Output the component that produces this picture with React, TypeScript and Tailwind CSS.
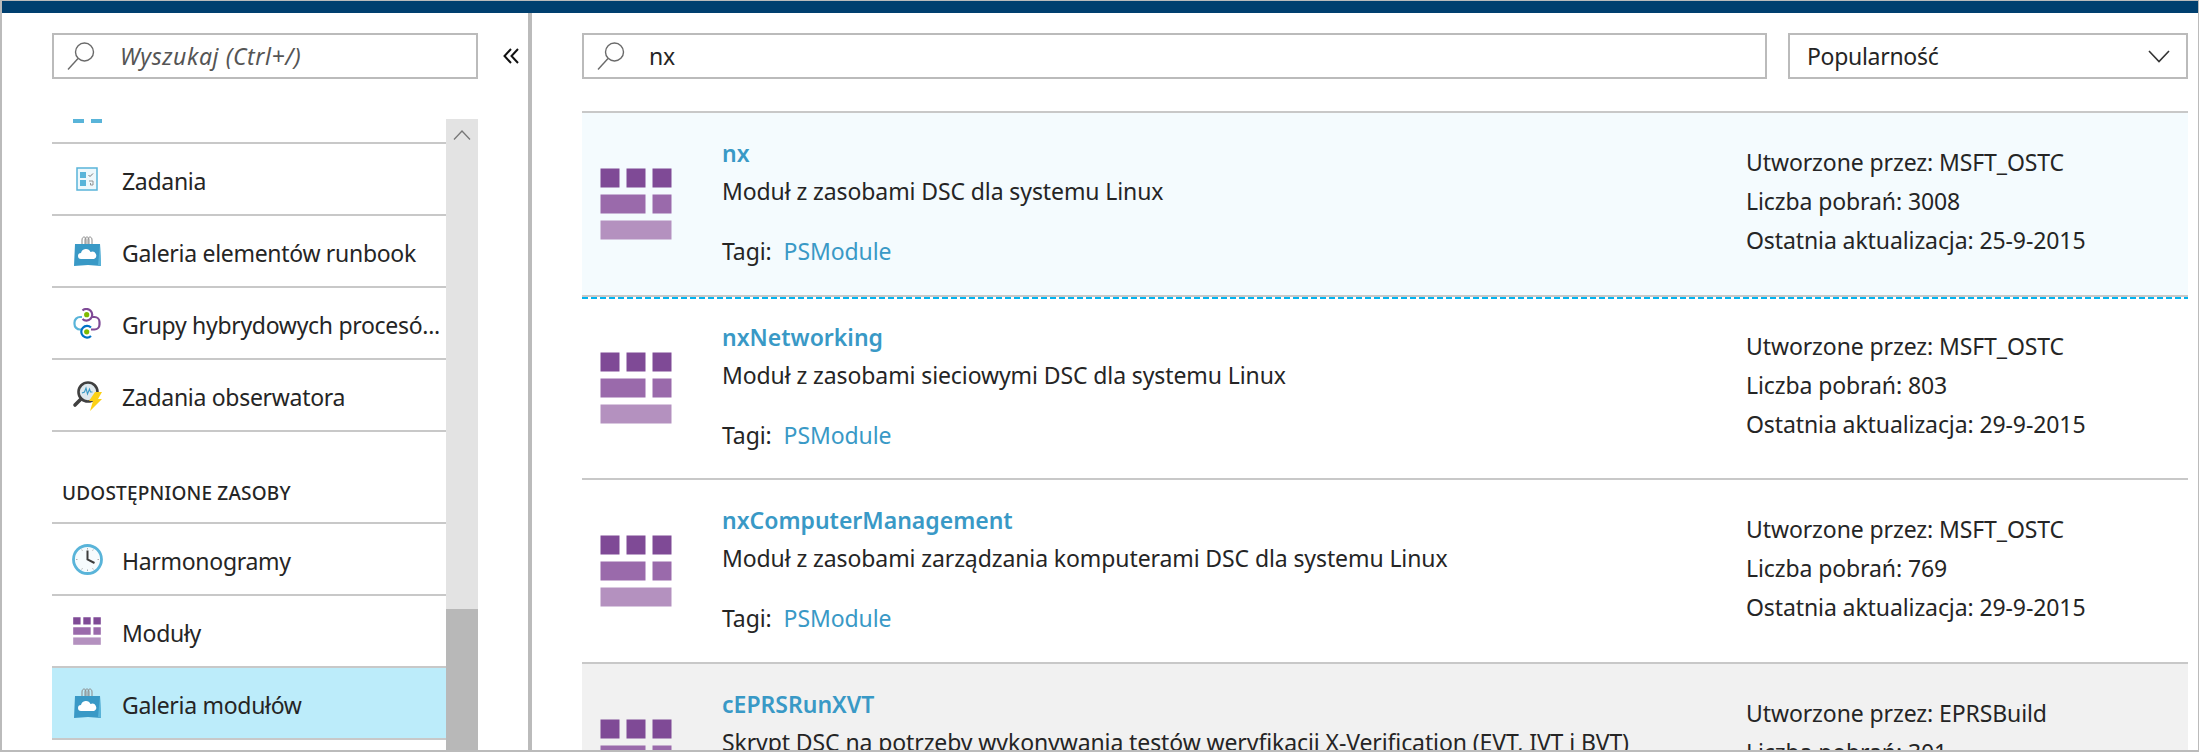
const font = "font-['Noto_Sans',sans-serif]"

const SearchIcon = () => (
  <svg width="30" height="30" viewBox="0 0 30 30" fill="none" stroke="#6a6a6a" strokeWidth="1.4">
    <circle cx="18.5" cy="11" r="9" />
    <path d="M12 17.5 2 28.5" />
  </svg>
)

const ModuleIcon = ({ big }: { big?: boolean }) => (
  <svg width={big ? 72 : 28} height={big ? 72 : 28} viewBox="0 0 72 72">
    <path d="M0.5 0.5h19v19h-19zM26.5 0.5h19v19h-19zM52.5 0.5h19v19h-19z" fill="#7f4a96" />
    <path d="M0.5 26.5h45v19h-45zM52.5 26.5h19v19h-19z" fill="#9a6aab" />
    <path d="M0.5 52.5h71v19h-71z" fill="#b491bf" />
  </svg>
)

const TasksIcon = () => (
  <svg width="22" height="24" viewBox="0 0 22 24">
    <rect x="1" y="1" width="20" height="22" fill="#eef8fc" stroke="#59b4d9" strokeWidth="1.5" />
    <rect x="4" y="5" width="6" height="6" fill="#59b4d9" />
    <rect x="4" y="13" width="6" height="6" fill="#59b4d9" />
    <path d="M12.5 8l1.5 1.5 3-3" fill="none" stroke="#666" strokeWidth="0.9" />
    <path d="M13 14h4v4h-2.500v-2" fill="none" stroke="#888" strokeWidth="0.9" />
  </svg>
)

const BagIcon = () => (
  <svg width="27" height="31" viewBox="0 0 27 31">
    <path d="M8 9V4c0-4 4-4 4 0v5M11 9V4c0-4 4-4 4 0v5M14 9V4c0-4 4-4 4 0v5" fill="none" stroke="#8a8a8a" strokeWidth="1" />
    <path d="M1 8h25l1 22-13-1-14 1z" fill="#3999c6" />
    <path d="M26 8l1 22-3-1z" fill="#59b4d9" />
    <path d="M7 23a3 3 0 0 1 0-6 5 5 0 0 1 9.500-1 3.500 3.500 0 0 1 3.500 7z" fill="#fff" />
  </svg>
)

const HybridIcon = () => (
  <svg width="28" height="31" viewBox="0 0 28 31" fill="none" strokeWidth="2.200">
    <path d="M9 9H7a5.500 5.500 0 0 0-5.500 5.500v1.500A5.500 5.500 0 0 0 7 21.500h2" stroke="#59b4d9" />
    <path d="M19 9h2.500a5 5 0 0 1 5 5v2.500a5 5 0 0 1-5 5H18" stroke="#7f4a96" />
    <path d="M9.500 2.500a5.800 5.800 0 1 1 0 8.500" stroke="#7f4a96" />
    <path d="M18 19.500a5.800 5.800 0 1 0 0 8.500" stroke="#0072c6" />
    <circle cx="13.700" cy="6.700" r="2.600" fill="#7fba00" stroke="none" />
    <circle cx="13.700" cy="23.800" r="2.600" fill="#7fba00" stroke="none" />
  </svg>
)

const WatcherIcon = () => (
  <svg width="30" height="32" viewBox="0 0 30 32">
    <circle cx="16" cy="13" r="9.500" fill="#dfe9ee" stroke="#404040" strokeWidth="2.600" />
    <path d="M9 20 3 26" stroke="#404040" strokeWidth="3.600" strokeLinecap="round" />
    <path d="M10 14l2.500-1 1.500-4 1.500 6 2-5 1 3h2" fill="none" stroke="#3999c6" strokeWidth="1.100" />
    <path d="M23 13h7l-4 7h4L18 32l3-10h-4z" fill="#fcd116" />
  </svg>
)

const ClockIcon = () => (
  <svg width="31" height="31" viewBox="0 0 31 31">
    <circle cx="15.500" cy="15.500" r="14" fill="#f6fbfd" stroke="#59b4d9" strokeWidth="2.800" />
    <path d="M15.500 6.500v9l7 3.500" fill="none" stroke="#3c3c3c" strokeWidth="2" />
    <path d="M15.500 4v1.500M15.500 25.500v1.500M4 15.500h1.500M25.500 15.500h1.500M9.700 5.500l.7 1.200M21.300 5.500l-.7 1.200M9.700 25.500l.7-1.200M21.300 25.500l-.7-1.200" stroke="#999" strokeWidth="0.800" />
  </svg>
)

const navItems = [
  { label: "Zadania", icon: <TasksIcon /> },
  { label: "Galeria elementów runbook", icon: <BagIcon /> },
  { label: "Grupy hybrydowych procesó...", icon: <HybridIcon /> },
  { label: "Zadania obserwatora", icon: <WatcherIcon /> },
  { section: "UDOSTĘPNIONE ZASOBY" },
  { label: "Harmonogramy", icon: <ClockIcon /> },
  { label: "Moduły", icon: <ModuleIcon /> },
  { label: "Galeria modułów", icon: <BagIcon />, active: true },
]

const modules = [
  { name: "nx", desc: "Moduł z zasobami DSC dla systemu Linux", author: "MSFT_OSTC", downloads: "3008", updated: "25-9-2015", selected: true },
  { name: "nxNetworking", desc: "Moduł z zasobami sieciowymi DSC dla systemu Linux", author: "MSFT_OSTC", downloads: "803", updated: "29-9-2015" },
  { name: "nxComputerManagement", desc: "Moduł z zasobami zarządzania komputerami DSC dla systemu Linux", author: "MSFT_OSTC", downloads: "769", updated: "29-9-2015" },
  { name: "cEPRSRunXVT", desc: "Skrypt DSC na potrzeby wykonywania testów weryfikacji X-Verification (EVT, IVT i BVT)", author: "EPRSBuild", downloads: "301", updated: "", gray: true },
]

export default function App() {
  return (
    <div className={`${font} flex h-[752px] w-[2199px] flex-col overflow-hidden border-t border-r border-b-2 border-l-2 border-[#bbbbbb] bg-white text-[23px] tracking-[-0.1px] text-[#252525]`}>
      <div className="h-[12px] shrink-0 bg-[#003f6f]" />
      <div className="flex min-h-0 flex-1">
        <aside className="flex w-[530px] shrink-0 flex-col border-r-4 border-[#bbbbbb] pt-[20px] pl-[50px]">
          <div className="flex items-center">
            <div className="flex h-[46px] w-[426px] items-center border-2 border-[#bbbbbb] pl-[12px]">
              <SearchIcon />
              <span className="ml-[24px] tracking-[0.6px] text-[#555555] italic">Wyszukaj (Ctrl+/)</span>
            </div>
            <svg className="ml-[25px]" width="16" height="16" viewBox="0 0 16 16" fill="none" stroke="#111" strokeWidth="2">
              <path d="M8 1 1.500 8 8 15M15 1 8.500 8 15 15" />
            </svg>
          </div>
          <div className="mt-[40px] flex min-h-0 w-[426px] flex-1">
            <div className="w-[394px]">
              <div className="flex h-[25px] gap-[7px] border-b-2 border-[#c8c8c8] pl-[21px]">
                <div className="h-[4px] w-[11px] bg-[#59b4d9]" />
                <div className="h-[4px] w-[11px] bg-[#59b4d9]" />
              </div>
              {navItems.map((item) =>
                item.section ? (
                  <div key={item.section} className="flex h-[92px] items-end border-b-2 border-[#c8c8c8] pb-[15px] pl-[10px] text-[19px] font-medium tracking-[0.2px]">
                    {item.section}
                  </div>
                ) : (
                  <div key={item.label} className={`flex h-[72px] items-center border-b-2 border-[#c8c8c8] ${item.active ? "bg-[#bcecfa]" : ""}`}>
                    <div className="flex w-[70px] shrink-0 justify-center">{item.icon}</div>
                    <span className="pt-[4px] tracking-[-0.3px] whitespace-nowrap">{item.label}</span>
                  </div>
                ),
              )}
            </div>
            <div className="flex w-[32px] flex-col bg-[#e3e3e3]">
              <svg className="mx-auto mt-[11px]" width="18" height="10" viewBox="0 0 18 10" fill="none" stroke="#777" strokeWidth="1.300">
                <path d="M1 9.500 9 1l8 8.500" />
              </svg>
              <div className="mt-auto h-[141px] bg-[#b8b8b8]" />
            </div>
          </div>
        </aside>
        <main className="min-w-0 flex-1 pt-[20px] pr-[10px] pl-[50px]">
          <div className="flex gap-[21px]">
            <div className="flex h-[46px] w-[1185px] items-center border-2 border-[#bbbbbb] pl-[12px]">
              <SearchIcon />
              <span className="ml-[23px]">nx</span>
            </div>
            <div className="flex h-[46px] w-[400px] items-center justify-between border-2 border-[#bbbbbb] pr-[16px] pl-[17px]">
              <span className="tracking-[-0.3px]">Popularność</span>
              <svg width="22" height="13" viewBox="0 0 22 13" fill="none" stroke="#333" strokeWidth="1.600">
                <path d="m1 1 10 10.500L21 1" />
              </svg>
            </div>
          </div>
          <div className="mt-[32px] border-t-2 border-[#c8c8c8]">
            {modules.map((m) => (
              <div
                key={m.name}
                className={`relative grid h-[183.5px] grid-cols-[140px_1fr_442px] border-b-2 border-[#c8c8c8] ${m.selected ? "bg-[#f4fbfe]" : m.gray ? "bg-[#f1f1f1]" : ""}`}
              >
                <div className="pt-[55px] pl-[18px]">
                  <ModuleIcon big />
                </div>
                <div className="pt-[26px]">
                  <div className="h-[28px] leading-[28px] font-semibold tracking-normal text-[#3999c6]">{m.name}</div>
                  <div className="mt-[10px] h-[28px] leading-[28px] whitespace-nowrap">{m.desc}</div>
                  <div className="mt-[32px] flex h-[28px] gap-[12px] leading-[28px]">
                    Tagi: <span className="text-[#3999c6]">PSModule</span>
                  </div>
                </div>
                <div className="pt-[30px] leading-[39px]">
                  <div>Utworzone przez: {m.author}</div>
                  <div>Liczba pobrań: {m.downloads}</div>
                  {m.updated && <div>Ostatnia aktualizacja: {m.updated}</div>}
                </div>
                {m.selected && (
                  <div className="absolute right-0 -bottom-[4px] left-0 h-[2px] bg-[repeating-linear-gradient(90deg,#00b4f0_0,#00b4f0_6px,transparent_6px,transparent_9px)]" />
                )}
              </div>
            ))}
          </div>
        </main>
      </div>
    </div>
  )
}
